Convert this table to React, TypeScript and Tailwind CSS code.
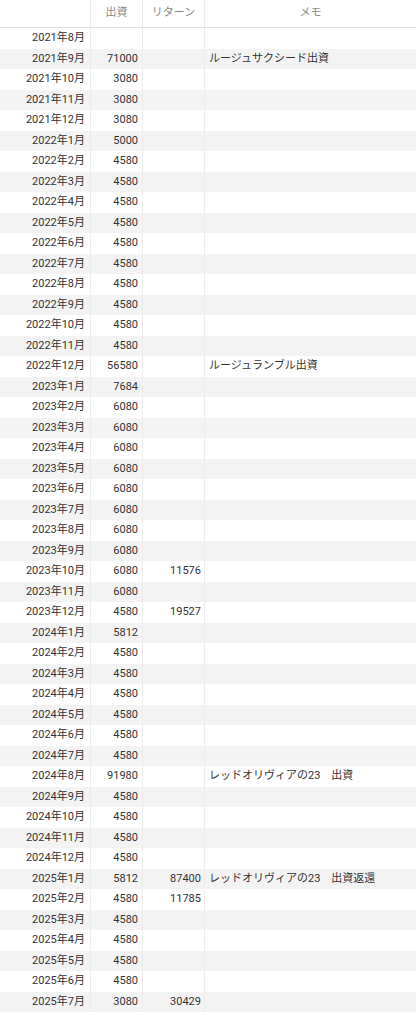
import React from "react";

type Row = { month: string; invest?: number; ret?: number; memo?: string };

// monthly ledger, oldest first
const rows: Row[] = [
  { month: "2021年8月" },
  { month: "2021年9月", invest: 71000, memo: "ルージュサクシード出資" },
  { month: "2021年10月", invest: 3080 },
  { month: "2021年11月", invest: 3080 },
  { month: "2021年12月", invest: 3080 },
  { month: "2022年1月", invest: 5000 },
  { month: "2022年2月", invest: 4580 },
  { month: "2022年3月", invest: 4580 },
  { month: "2022年4月", invest: 4580 },
  { month: "2022年5月", invest: 4580 },
  { month: "2022年6月", invest: 4580 },
  { month: "2022年7月", invest: 4580 },
  { month: "2022年8月", invest: 4580 },
  { month: "2022年9月", invest: 4580 },
  { month: "2022年10月", invest: 4580 },
  { month: "2022年11月", invest: 4580 },
  { month: "2022年12月", invest: 56580, memo: "ルージュランブル出資" },
  { month: "2023年1月", invest: 7684 },
  { month: "2023年2月", invest: 6080 },
  { month: "2023年3月", invest: 6080 },
  { month: "2023年4月", invest: 6080 },
  { month: "2023年5月", invest: 6080 },
  { month: "2023年6月", invest: 6080 },
  { month: "2023年7月", invest: 6080 },
  { month: "2023年8月", invest: 6080 },
  { month: "2023年9月", invest: 6080 },
  { month: "2023年10月", invest: 6080, ret: 11576 },
  { month: "2023年11月", invest: 6080 },
  { month: "2023年12月", invest: 4580, ret: 19527 },
  { month: "2024年1月", invest: 5812 },
  { month: "2024年2月", invest: 4580 },
  { month: "2024年3月", invest: 4580 },
  { month: "2024年4月", invest: 4580 },
  { month: "2024年5月", invest: 4580 },
  { month: "2024年6月", invest: 4580 },
  { month: "2024年7月", invest: 4580 },
  { month: "2024年8月", invest: 91980, memo: "レッドオリヴィアの23　出資" },
  { month: "2024年9月", invest: 4580 },
  { month: "2024年10月", invest: 4580 },
  { month: "2024年11月", invest: 4580 },
  { month: "2024年12月", invest: 4580 },
  { month: "2025年1月", invest: 5812, ret: 87400, memo: "レッドオリヴィアの23　出資返還" },
  { month: "2025年2月", invest: 4580, ret: 11785 },
  { month: "2025年3月", invest: 4580 },
  { month: "2025年4月", invest: 4580 },
  { month: "2025年5月", invest: 4580 },
  { month: "2025年6月", invest: 4580 },
  { month: "2025年7月", invest: 3080, ret: 30429 },
];

const cols = "grid grid-cols-[90px_52px_62px_1fr]";
const cell = "flex items-center border-l border-[#ececec]";

export default function App() {
  return (
    <div
      className="min-h-[1024px] w-full bg-white text-[11px] text-[#333]"
      style={{ fontFamily: 'Roboto, "Noto Sans CJK JP", sans-serif' }}
    >
      <div className={`${cols} h-[28px] border-b border-[#e2e2e2] text-[#888]`}>
        <div />
        <div className={`${cell} justify-center`}>出資</div>
        <div className={`${cell} justify-center`}>リターン</div>
        <div className={`${cell} justify-center`}>メモ</div>
      </div>
      {rows.map((r, i) => (
        <div
          key={r.month}
          className={`${cols} h-[20.5px] ${i % 2 === 1 ? "bg-[#f3f3f3]" : "bg-white"}`}
        >
          <div className="flex items-center justify-end pr-[5px]">{r.month}</div>
          <div className={`${cell} justify-end pr-[4px]`}>{r.invest ?? ""}</div>
          <div className={`${cell} justify-end pr-[3px]`}>{r.ret ?? ""}</div>
          <div className={`${cell} whitespace-pre pl-[4px]`}>{r.memo ?? ""}</div>
        </div>
      ))}
    </div>
  );
}
